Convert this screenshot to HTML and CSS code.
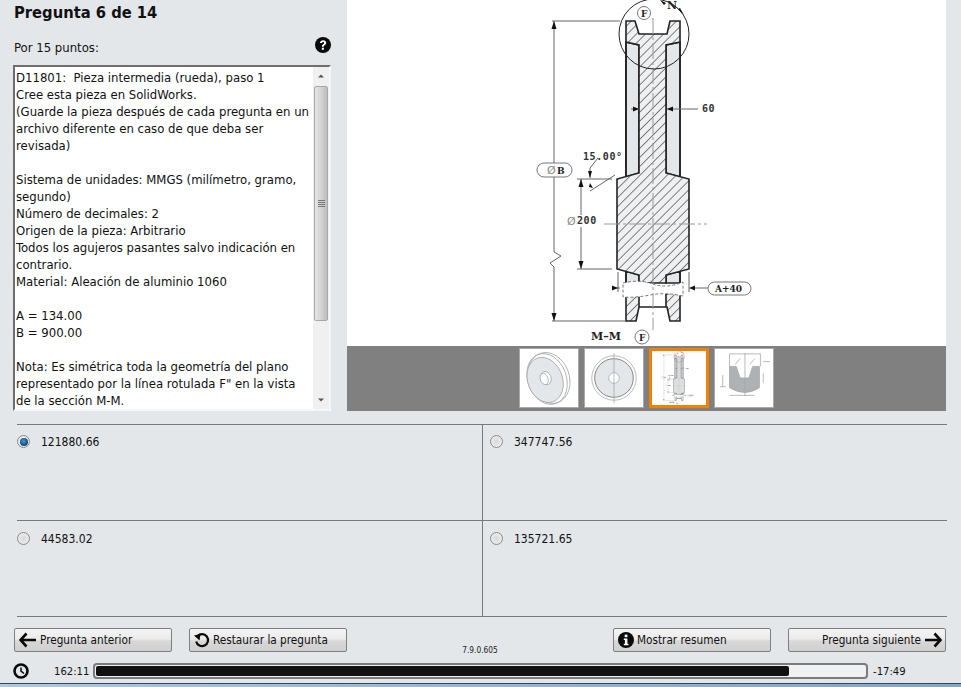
FILE: index.html
```html
<!DOCTYPE html>
<html lang="es">
<head>
<meta charset="utf-8">
<title>Pregunta 6 de 14</title>
<link rel="stylesheet" href="styles.css">
</head>
<body>
<div class="page">
  <section class="top">
    <div class="left">
      <h1 class="title">Pregunta 6 de 14</h1>
      <div class="points-row">
        <span>Por 15 puntos:</span>
        <svg class="help" viewBox="0 0 16 16" width="16" height="16"><circle cx="8" cy="8" r="8" fill="#0a0a0a"/><path d="M4.9 6.1C5 4.2 6.3 3.2 8.1 3.2c1.800 0 3.100 1 3.100 2.600 0 1.300-.8 1.900-1.600 2.400-.6.4-.8.700-.8 1.300v.3H6.900v-.5c0-1 .4-1.600 1.200-2.100.7-.5 1-.8 1-1.300 0-.6-.4-1-1-1-.7 0-1.100.4-1.200 1.200z" fill="#fff"/><rect x="6.800" y="10.700" width="2.100" height="2.100" fill="#fff"/></svg>
      </div>
      <div class="textbox">
        <div class="text">D11801:&nbsp; Pieza intermedia (rueda), paso 1
Cree esta pieza en SolidWorks.
(Guarde la pieza después de cada pregunta en un archivo diferente en caso de que deba ser revisada)

Sistema de unidades: MMGS (milímetro, gramo, segundo)
Número de decimales: 2
Origen de la pieza: Arbitrario
Todos los agujeros pasantes salvo indicación en contrario.
Material: Aleación de aluminio 1060

A = 134.00
B = 900.00

Nota: Es simétrica toda la geometría del plano representado por la línea rotulada F" en la vista de la sección M-M.</div>
        <div class="scrollbar">
          <svg class="arrow" viewBox="0 0 16 16" width="16" height="17"><path d="M5 10l3-3 3 3z" fill="#555"/></svg>
          <div class="track"><div class="thumb"><span class="grip"></span><span class="grip"></span><span class="grip"></span><span class="grip"></span></div></div>
          <svg class="arrow" viewBox="0 0 16 16" width="16" height="17"><path d="M5 6l3 3 3-3z" fill="#555"/></svg>
        </div>
      </div>
    </div>
    <div class="viewer">
      <div class="drawing">
        <svg viewBox="347 0 599 346" width="599" height="346">
          <defs>
            <pattern id="hatch" patternUnits="userSpaceOnUse" width="6.400" height="6.400" patternTransform="rotate(45)">
              <rect width="6.400" height="6.400" fill="#eef0f2"/>
              <line x1="0" y1="0" x2="0" y2="6.400" stroke="#333" stroke-width="1.200"/>
            </pattern>
          </defs>
          <g id="part">
            <g class="outline">
              <path class="plain" d="M626 42L639 45V173L626 177zM680 42L666 45V173L680 177z"/>
              <path class="plain" d="M626 271L639 275V283H626zM680 271L666 275V283H680z"/>
              <path class="cut" d="M626 21H635L639 34H667L670 21H680V42L666 45V173L689 179V269L666 275V283L639 283V275L617 269V179L639 173V45L626 42z"/>
              <path class="cut" d="M626 292L639 294V307H666V294L680 292V321H670L667 307H639L636 321H626z"/>
              <path class="thin" d="M626 42V177M680 42V177M626 271V283M680 271V283"/>
            </g>
            <path class="break" d="M623 283Q640 279 653 284T683 282V296Q665 292 650 295T623 297z"/>
            <path class="center" d="M653 18V330M604 224H707"/>
            <circle class="detail" cx="654" cy="34" r="35"/>
            <g class="dims">
              <path d="M552 21H620M552 321H625M577 179H612M577 269H612"/>
              <path d="M554 21V163M554 177V252L561 256 550 263 554 267V321"/>
              <path d="M581 179V215M581 227V269"/>
              <path d="M667 109H698M631 109H639"/>
              <path d="M620 288H612M695 288H708M618 272V292M689 272V292"/>
              <path d="M590 168V178M598 158L590 168M590 191L615 175"/>
            </g>
            <g class="heads">
              <path d="M554 21l-2.500 8h5zM554 321l-2.500-8h5zM581 179l-2.500 8h5zM581 269l-2.500-8h5z"/>
              <path d="M639 109l-6-2.500v5zM667 109l6-2.500v5zM618 288l-6-2.500v5zM689 288l6-2.500v5z"/>
              <path d="M590 178l-2-7h4zM590 183l3 5-4-1z"/>
              <path d="M660 0l6 3-2 2zM684 15l-6-6 2-1z"/>
            </g>
            <rect class="tag" x="537" y="163" width="35" height="14" rx="7"/>
            <rect class="tag" x="708" y="282" width="43" height="13" rx="6.500"/>
            <circle class="tag" cx="644" cy="13" r="6.500"/>
            <circle class="tag" cx="642" cy="337" r="7"/>
            <text class="dim-text" x="583" y="160">15.00°</text>
            <text class="dim-text" x="702" y="112">60</text>
            <text class="dim-text" x="577" y="224">200</text>
            <text class="dim-phi" x="547" y="174">Ø</text>
            <text class="dim-phi" x="567" y="225">Ø</text>
            <text class="dim-bold" x="557" y="174">B</text>
            <text class="dim-bold" x="715" y="292">A+40</text>
            <text class="dim-bold" x="641" y="17">F</text>
            <text class="dim-bold" x="639" y="341">F</text>
            <text class="dim-serif" x="667" y="9">N</text>
            <text class="dim-serif" x="591" y="340">M–M</text>
          </g>
        </svg>
      </div>
      <div class="thumbs">
        <button class="thumb-card" type="button" aria-label="Vista 1">
          <svg viewBox="0 0 58 58" width="56" height="56"><g class="mini"><ellipse cx="27" cy="30" rx="20" ry="27" transform="rotate(-20 27 30)"/><ellipse cx="29" cy="29" rx="21" ry="27" transform="rotate(-20 29 29)"/><ellipse class="mini-fill" cx="25" cy="31" rx="18" ry="24" transform="rotate(-20 25 31)"/><ellipse class="mini-white" cx="26" cy="29" rx="5" ry="7" transform="rotate(-20 26 29)"/><ellipse class="mini-white" cx="24" cy="30" rx="4" ry="6" transform="rotate(-20 24 30)"/></g></svg>
        </button>
        <button class="thumb-card" type="button" aria-label="Vista 2">
          <svg viewBox="0 0 58 58" width="56" height="56"><g class="mini"><circle cx="29" cy="29" r="23"/><circle class="mini-fill mini-ring" cx="29" cy="29" r="20"/><circle class="mini-white" cx="29" cy="29" r="5.500"/><path d="M29 3V55"/></g></svg>
        </button>
        <button class="thumb-card selected" type="button" aria-label="Vista 3">
          <svg viewBox="480 -4 346 354" width="54" height="54"><use href="#part"/></svg>
        </button>
        <button class="thumb-card" type="button" aria-label="Vista 4">
          <svg viewBox="0 0 58 58" width="56" height="56"><g class="mini"><path class="mini-dark" d="M14 17h7l4 12h9l4-12h7v22q-15 10-31 0z"/><path d="M14 4H46M14 4V17M46 4V17M30 3V48M7 26V38M4 38H10M14 47H40M20 15L25 9M35 15L40 9M49 12H56M49 24V34"/></g></svg>
        </button>
      </div>
    </div>
  </section>

  <section class="answers">
    <label class="answer"><span class="radio checked"></span><span>121880.66</span></label>
    <label class="answer"><span class="radio"></span><span>347747.56</span></label>
    <label class="answer"><span class="radio"></span><span>44583.02</span></label>
    <label class="answer"><span class="radio"></span><span>135721.65</span></label>
  </section>

  <section class="nav">
    <button class="btn" type="button">
      <svg viewBox="0 0 18 16" width="18" height="16"><path d="M7.500 1.500L1.500 8l6 6.500M2 8H17" class="ico"/></svg>
      <span>Pregunta anterior</span>
    </button>
    <button class="btn" type="button">
      <svg viewBox="0 0 16 16" width="16" height="16"><path d="M3.500 4.200A6 6 0 1 1 2.200 9.500" class="ico thin-ico"/><path d="M0 3.500L6.500 2 5.500 8.500z" class="ico-fill"/></svg>
      <span>Restaurar la pregunta</span>
    </button>
    <div class="version">7.9.0.605</div>
    <button class="btn" type="button">
      <svg viewBox="0 0 16 16" width="16" height="16"><circle cx="8" cy="8" r="8" fill="#0a0a0a"/><rect x="6.700" y="2.600" width="2.700" height="2.600" fill="#fff"/><path d="M5.800 6.500H9.400V11.800H10.500V13.200H5.800V11.800H6.900V7.900H5.800z" fill="#fff"/></svg>
      <span>Mostrar resumen</span>
    </button>
    <button class="btn btn-next" type="button">
      <span>Pregunta siguiente</span>
      <svg viewBox="0 0 18 16" width="18" height="16"><path d="M10.500 1.500L16.500 8l-6 6.500M16 8H1" class="ico"/></svg>
    </button>
  </section>

  <section class="timer">
    <svg class="clock" viewBox="0 0 16 16" width="16" height="16"><circle cx="8" cy="8" r="6.500" fill="none" stroke="#0a0a0a" stroke-width="2.600"/><path d="M8 4.500V8.200L11 10.500" fill="none" stroke="#0a0a0a" stroke-width="1.500"/></svg>
    <span class="elapsed">162:11</span>
    <div class="progress"><div class="progress-fill" style="width:693px"></div></div>
    <span class="remaining">-17:49</span>
  </section>
  <div class="taskbar"></div>
</div>
</body>
</html>
```
FILE: styles.css
```css
* { box-sizing: border-box; }
html, body { margin: 0; padding: 0; }
body {
  width: 961px;
  height: 687px;
  overflow: hidden;
  background: #e3e7ea;
  color: #111;
  font-family: "DejaVu Sans Condensed", "DejaVu Sans", sans-serif;
  font-size: 13px;
}
.page { display: flex; flex-direction: column; height: 687px; }

.top { display: flex; height: 411px; }
.left { width: 347px; padding: 0 16px 0 13px; display: flex; flex-direction: column; }
.title { margin: 0; padding: 2px 0 0 1px; font-size: 16.400px; line-height: 22px; font-weight: bold; height: 36px; }
.points-row { display: flex; justify-content: space-between; align-items: center; height: 29px; padding: 0 0 7px 1px; }
.points-row .help { margin: -4px 0 0 0; flex: none; }
.textbox {
  flex: none; height: 346px; width: 318px; display: flex; overflow: hidden; background: #fff;
  border-top: 2px solid #6e6e6e; border-left: 2px solid #6e6e6e; border-right: 2px solid #f5f6f7; border-bottom: 2px solid #f5f6f7;
}
.text { flex: 1; min-width: 0; padding: 2px 0 0 1px; line-height: 17px; white-space: pre-line; overflow: hidden; }
.scrollbar { width: 16px; flex: none; display: flex; flex-direction: column; background: #f0f0f0; }
.arrow { display: block; flex: none; }
.track { flex: 1; padding: 2px 1px 0; }
.thumb {
  height: 235px; border: 1px solid #a8a8a8; border-radius: 2px;
  background: linear-gradient(to right, #e6e6e6, #cfcfcf 60%, #bdbdbd);
  display: flex; flex-direction: column; align-items: center; justify-content: center; gap: 1px;
}
.grip { width: 7px; height: 1px; background: #777; }

.viewer { width: 599px; display: flex; flex-direction: column; }
.drawing { height: 346px; background: #fff; overflow: hidden; }
.drawing svg { display: block; }
.thumbs { height: 65px; background: #808080; display: flex; justify-content: center; align-items: center; gap: 5px; padding-bottom: 1px; }
.thumb-card { width: 60px; height: 60px; padding: 0; border: 1px solid #a9a9a9; background: #fff; display: flex; align-items: center; justify-content: center; }
.thumb-card.selected { border: 3px solid #f58000; }

.outline path { stroke: #222; stroke-width: 1.600; }
.plain { fill: #e3e7ea; }
.cut { fill: url(#hatch); }
.outline .thin { fill: none; }
.break { fill: #fff; stroke: #555; stroke-width: .8; stroke-dasharray: 3 2; }
.center { fill: none; stroke: #999; stroke-width: 1; stroke-dasharray: 16 3 3 3; }
.detail { fill: none; stroke: #222; stroke-width: 1; }
.dims path { fill: none; stroke: #666; stroke-width: 1; }
.heads path { fill: #111; stroke: none; }
.tag { fill: #fff; stroke: #777; stroke-width: 1; }
.dim-text { font-family: "DejaVu Sans Mono", monospace; font-size: 10px; font-weight: bold; letter-spacing: .6px; fill: #333; }
.dim-bold { font-family: "DejaVu Serif", serif; font-size: 9px; font-weight: bold; fill: #222; }
.dim-serif { font-family: "DejaVu Serif", serif; font-size: 11px; font-weight: bold; fill: #222; }
.dim-phi { font-family: "DejaVu Sans", sans-serif; font-size: 11px; fill: #888; }

.mini * { fill: none; stroke: #a4a6a8; stroke-width: .8; }
.mini .mini-fill { fill: #e3e7ea; }
.mini .mini-ring { stroke: #666; }
.mini .mini-white { fill: #fff; }
.mini .mini-dark { fill: #aeb2b5; }

.answers { margin: 13px 14px 0 17px; display: grid; grid-template-columns: 466px 464px; grid-template-rows: 96px 96px; border-top: 1px solid #7a7a7a; height: 193px; font-size: 12px; }
.answer { display: flex; align-items: flex-start; gap: 11px; padding: 10px 0 0 0; border-bottom: 1px solid #7a7a7a; }
.answer:nth-child(n+3) { padding-top: 11px; }
.answer:nth-child(odd) { border-right: 1px solid #7a7a7a; }
.answer:nth-child(even) { padding-left: 7px; }
.radio {
  width: 13px; height: 13px; margin-top: 0; flex: none; border-radius: 50%; border: 1px solid #8a8a8a;
  background: radial-gradient(circle, #d8d8d8, #f4f4f4);
  display: flex; align-items: center; justify-content: center;
}
.radio.checked::after { content: ""; width: 8px; height: 8px; border-radius: 50%; background: radial-gradient(circle at 45% 40%, #3f9fd6, #0c3f6e 75%); }

.nav { display: flex; gap: 17px; padding: 11px 15px 0 14px; height: 46px; font-size: 11.700px; }
.btn {
  width: 158px; height: 24px; padding: 0 0 0 4px; display: flex; align-items: center; gap: 3px;
  font: inherit; color: #111; border: 1px solid #7f7f7f; border-radius: 2px;
  background: linear-gradient(to bottom, #f4f4f4 0, #ebebeb 45%, #d8d8d8 55%, #cfcfcf 100%);
}
.btn-next { justify-content: flex-end; padding: 0 3px 0 0; }
.version { flex: 1; font-size: 8.300px; text-align: center; margin: 17px -17px 0; color: #222; }
.ico { fill: none; stroke: #0a0a0a; stroke-width: 2.600; }
.thin-ico { stroke-width: 2.200; }
.ico-fill { fill: #0a0a0a; }

.timer { display: flex; align-items: center; height: 16px; padding: 0 0 0 13px; font-size: 11.200px; }
.clock { flex: none; }
.elapsed { margin-left: 25px; width: 39px; }
.progress { width: 775px; height: 16px; padding: 1px; border: 2px solid #7b7b7b; border-radius: 4px; background: #f0f1f2; }
.progress-fill { height: 100%; background: #111; border-radius: 2px; }
.remaining { margin-left: 5px; }
.taskbar { margin-top: auto; height: 4px; border-top: 1px solid #33465c; background: linear-gradient(to right, #a9c8e4, #7fa6cc); }
```
